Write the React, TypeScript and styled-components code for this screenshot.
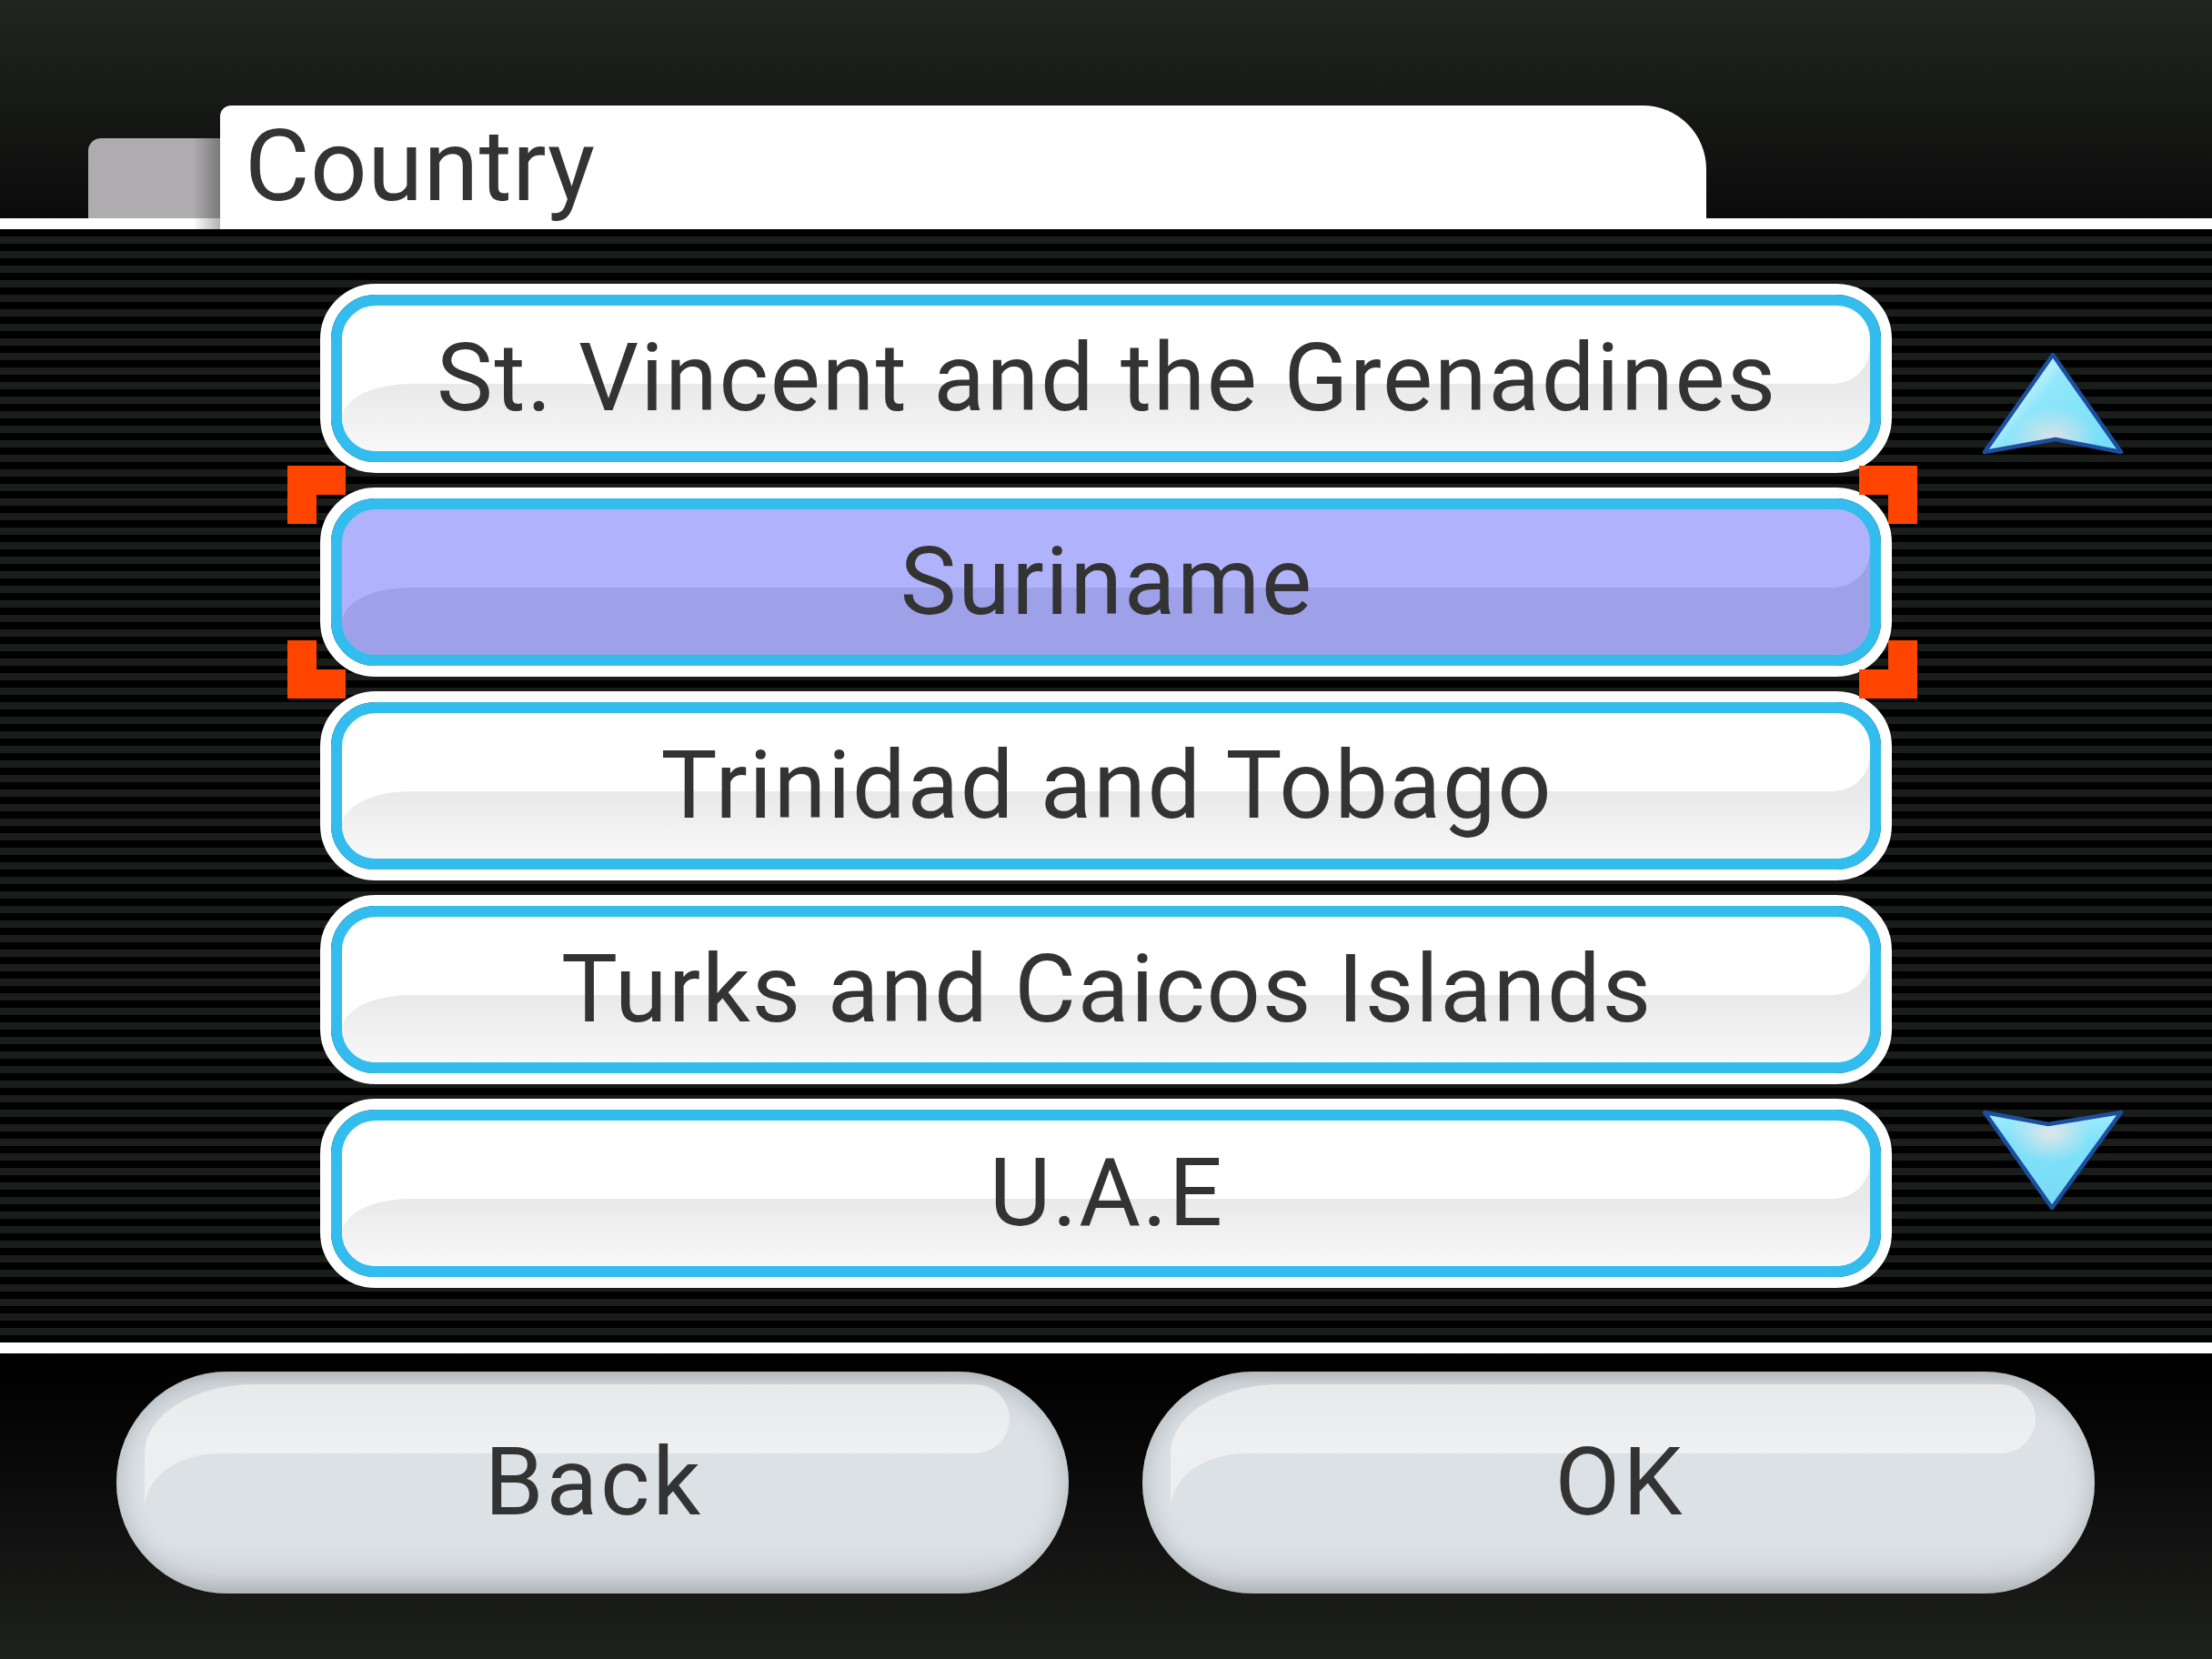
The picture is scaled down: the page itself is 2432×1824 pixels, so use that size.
import React from 'react';
import styled, { createGlobalStyle } from 'styled-components';

const GlobalStyle = createGlobalStyle`
  html, body { margin: 0; padding: 0; background: #000; }
  body { font-family: Roboto, "Noto Sans", sans-serif; }
`;

const Screen = styled.div`
  width: 2432px;
  height: 1824px;
  display: flex;
  flex-direction: column;
  overflow: hidden;
`;

const Header = styled.header`
  box-sizing: border-box;
  height: 252px;
  border-bottom: 12px solid #fff;
  background: linear-gradient(to bottom, #222420 0%, #181a17 45%, #0b0b0b 100%);
  display: flex;
  align-items: flex-end;
  padding-left: 97px;
`;

const BackTab = styled.div`
  width: 145px;
  height: 88px;
  background: #aeacaf;
  border-radius: 14px 0 0 0;
`;

const TitleTab = styled.div`
  position: relative;
  box-sizing: border-box;
  width: 1634px;
  height: 136px;
  margin-bottom: -12px;
  background: #fff;
  border-radius: 12px 70px 0 0;
  padding: 12px 0 0 27px;
  &::before {
    content: '';
    position: absolute;
    left: -30px;
    top: 36px;
    bottom: 0;
    width: 30px;
    background: linear-gradient(to right, rgba(0, 0, 0, 0), rgba(0, 0, 0, 0.3));
  }
`;

const Title = styled.h1`
  margin: 0;
  font-family: Roboto, "Noto Sans", sans-serif;
  font-weight: 400;
  font-size: 110px;
  line-height: 1;
  letter-spacing: 0.5px;
  color: #333;
`;

const ListArea = styled.main`
  height: 1224px;
  background: repeating-linear-gradient(to bottom, #000 0px, #000 8px, #1a1e1b 8px, #1a1e1b 16px);
  display: grid;
  grid-template-columns: 352px 1728px 352px;
`;

const List = styled.div`
  grid-column: 2;
  display: flex;
  flex-direction: column;
  gap: 16px;
  padding: 60px 0;
`;

const Scroller = styled.div`
  grid-column: 3;
  display: flex;
  flex-direction: column;
  justify-content: space-between;
  align-items: center;
  padding: 132px 0 140px;
`;

const Row = styled.div`
  position: relative;
  box-sizing: border-box;
  height: 208px;
  border: 12px solid #fff;
  border-radius: 61px;
  display: flex;
`;

const RowFace = styled.div<{ $selected?: boolean }>`
  position: relative;
  flex: 1;
  border: 12px solid #33bdee;
  border-radius: 49px;
  overflow: hidden;
  display: flex;
  align-items: center;
  justify-content: center;
  background: ${(p) => (p.$selected ? '#b0b3fc' : '#ffffff')};
  &::before {
    content: '';
    position: absolute;
    left: 0;
    right: 0;
    top: 86px;
    bottom: 0;
    border-top-left-radius: 74px 38px;
    background: ${(p) => (p.$selected ? '#9fa1e8' : 'linear-gradient(to bottom, #e9e9e9, #f8f8f8)')};
  }
  &::after {
    content: '';
    position: absolute;
    right: 0;
    top: 46px;
    width: 40px;
    height: 40px;
    background: radial-gradient(
      circle at 0 0,
      rgba(0, 0, 0, 0) 39.5px,
      ${(p) => (p.$selected ? '#9fa1e8' : '#e9e9e9')} 40px
    );
  }
`;

const RowLabel = styled.span`
  position: relative;
  z-index: 1;
  font-family: Roboto, "Noto Sans", sans-serif;
  font-weight: 400;
  font-size: 104px;
  line-height: 1;
  letter-spacing: 1.8px;
  padding-left: 1.8px;
  color: #333;
  white-space: nowrap;
`;

type V = 'top' | 'bottom';
type H = 'left' | 'right';

const Bracket = styled.span<{ $v: V; $h: H }>`
  position: absolute;
  z-index: 2;
  width: 32px;
  height: 32px;
  ${(p) => p.$v}: -36px;
  ${(p) => p.$h}: ${(p) => (p.$h === 'left' ? '-48px' : '-40px')};
  border-${(p) => p.$v}: 32px solid #ff4400;
  border-${(p) => p.$h}: 32px solid #ff4400;
`;

const Footer = styled.footer`
  box-sizing: border-box;
  height: 348px;
  border-top: 12px solid #fff;
  background: linear-gradient(to bottom, #000 0%, #070707 30%, #1f211e 100%);
  display: flex;
  gap: 81px;
  padding: 20px 0 0 128px;
`;

const PillButton = styled.button`
  position: relative;
  box-sizing: border-box;
  width: 1047px;
  height: 244px;
  border: 0;
  border-radius: 122px;
  padding: 0;
  overflow: hidden;
  background: linear-gradient(
    to bottom,
    #c3c7cb 0px,
    #d3d8dc 14px,
    #dce1e5 60px,
    #dce1e5 190px,
    #d3d7db 222px,
    #bec2c6 244px
  );
  box-shadow: inset 0 0 26px 2px rgba(150, 156, 162, 0.6);
  display: flex;
  align-items: center;
  justify-content: center;
  &::before {
    content: '';
    position: absolute;
    left: 31px;
    top: 14px;
    width: 951px;
    height: 76px;
    border-radius: 120px 38px 38px 0 / 76px 38px 38px 0;
    background: linear-gradient(to bottom, #e7e9eb, #eff0f2);
  }
  &::after {
    content: '';
    position: absolute;
    left: 31px;
    top: 90px;
    width: 81px;
    height: 60px;
    background: radial-gradient(ellipse 81px 60px at 100% 100%, rgba(0, 0, 0, 0) 99%, #eceef0 100%);
  }
`;

const ButtonLabel = styled.span`
  position: relative;
  z-index: 1;
  font-family: Roboto, "Noto Sans", sans-serif;
  font-weight: 400;
  font-size: 104px;
  line-height: 1;
  letter-spacing: 3px;
  padding-left: 3px;
  color: #333;
`;

const ArrowIcon = styled.svg`
  display: block;
  width: 160px;
  height: 120px;
  overflow: visible;
`;

const UpArrow = () => (
  <ArrowIcon viewBox="0 0 160 120">
    <defs>
      <linearGradient id="upBase" x1="0" y1="0" x2="1" y2="1">
        <stop offset="0" stopColor="#a6eefd" />
        <stop offset="0.45" stopColor="#8ee6fb" />
        <stop offset="1" stopColor="#72ddf8" />
      </linearGradient>
      <radialGradient id="upGlow" cx="0.5" cy="0.86" r="0.32">
        <stop offset="0" stopColor="#e2e2e2" stopOpacity="0.95" />
        <stop offset="1" stopColor="#e2e2e2" stopOpacity="0" />
      </radialGradient>
      <linearGradient id="upStreak" x1="0" y1="0" x2="1" y2="0.6">
        <stop offset="0.3" stopColor="#ffffff" stopOpacity="0" />
        <stop offset="0.42" stopColor="#ffffff" stopOpacity="0.25" />
        <stop offset="0.5" stopColor="#ffffff" stopOpacity="0" />
      </linearGradient>
    </defs>
    <polygon points="81,6 156,113 84,99 6,113" fill="url(#upBase)" />
    <polygon points="81,6 156,113 84,99 6,113" fill="url(#upStreak)" />
    <polygon points="81,6 156,113 84,99 6,113" fill="url(#upGlow)" />
    <polygon
      points="81,6 156,113 84,99 6,113"
      fill="none"
      stroke="#1d4e9e"
      strokeWidth="4.5"
      strokeLinejoin="round"
    />
  </ArrowIcon>
);

const DownArrow = () => (
  <ArrowIcon viewBox="0 0 160 120">
    <defs>
      <linearGradient id="dnBase" x1="0" y1="0" x2="0" y2="1">
        <stop offset="0" stopColor="#a2ecfc" />
        <stop offset="0.3" stopColor="#7fe2fa" />
        <stop offset="1" stopColor="#7ad9f4" />
      </linearGradient>
      <radialGradient id="dnGlow" cx="0.48" cy="0.22" r="0.3">
        <stop offset="0" stopColor="#e6e6e6" stopOpacity="0.95" />
        <stop offset="1" stopColor="#e6e6e6" stopOpacity="0" />
      </radialGradient>
    </defs>
    <polygon points="6,7 76,20 156,7 80,112" fill="url(#dnBase)" />
    <polygon points="6,7 76,20 156,7 80,112" fill="url(#dnGlow)" />
    <polygon
      points="6,7 76,20 156,7 80,112"
      fill="none"
      stroke="#1d4e9e"
      strokeWidth="4.5"
      strokeLinejoin="round"
    />
  </ArrowIcon>
);

const countries = [
  'St. Vincent and the Grenadines',
  'Suriname',
  'Trinidad and Tobago',
  'Turks and Caicos Islands',
  'U.A.E',
];
const selectedIndex = 1;

export default function App() {
  return (
    <>
      <GlobalStyle />
      <Screen>
        <Header>
          <BackTab />
          <TitleTab>
            <Title>Country</Title>
          </TitleTab>
        </Header>
        <ListArea>
          <List>
            {countries.map((c, i) => {
              const sel = i === selectedIndex;
              return (
                <Row key={c}>
                  <RowFace $selected={sel}>
                    <RowLabel>{c}</RowLabel>
                  </RowFace>
                  {sel && (
                    <>
                      <Bracket $v="top" $h="left" />
                      <Bracket $v="top" $h="right" />
                      <Bracket $v="bottom" $h="left" />
                      <Bracket $v="bottom" $h="right" />
                    </>
                  )}
                </Row>
              );
            })}
          </List>
          <Scroller>
            <UpArrow />
            <DownArrow />
          </Scroller>
        </ListArea>
        <Footer>
          <PillButton>
            <ButtonLabel>Back</ButtonLabel>
          </PillButton>
          <PillButton>
            <ButtonLabel>OK</ButtonLabel>
          </PillButton>
        </Footer>
      </Screen>
    </>
  );
}
